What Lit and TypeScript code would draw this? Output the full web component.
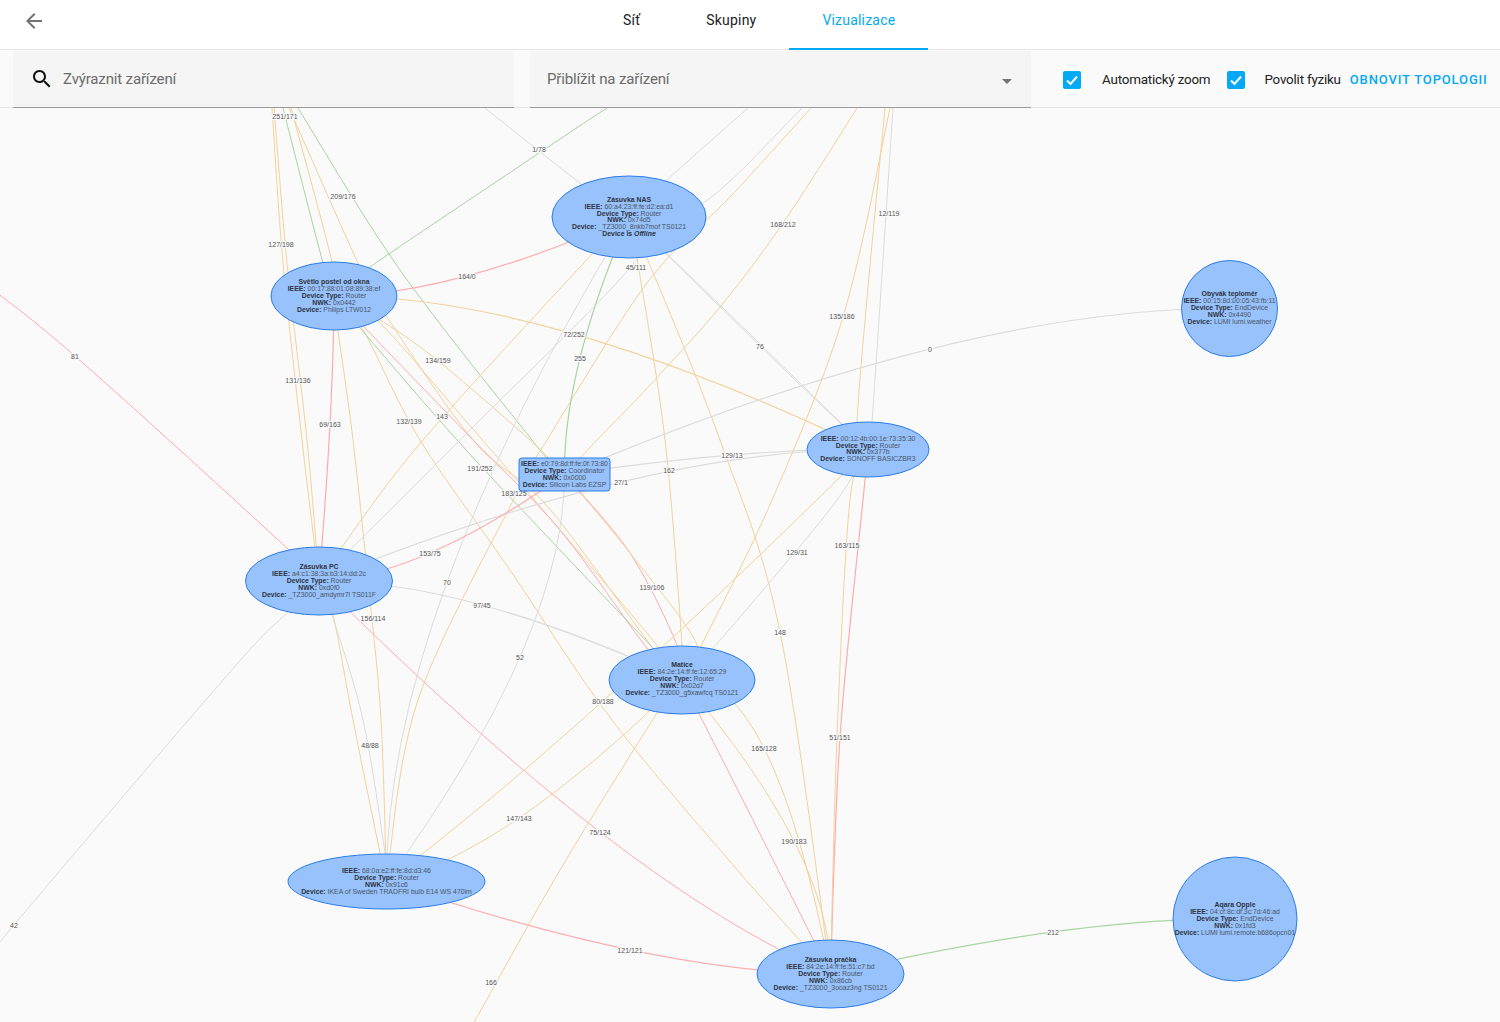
import { LitElement, html, css, svg } from "lit";
import { customElement } from "lit/decorators.js";

type Pt = [number, number];
const C: Record<string, Pt> = {
  nas: [629, 217], sv: [334, 296], pc: [319, 581], co: [564.5, 474.5], so: [868, 449.5],
  ma: [682, 680], ik: [386.5, 881.5], pr: [830.5, 974], ob: [1229.5, 308.5], aq: [1235, 919],
};
const O = "#f3d29b", G = "#a8d5a0", R = "#ffabab", Y = "#dcdcdc";

/* p: smooth line through hand-read points; q: [from, point at the curve's middle, to] */
const EDGES: { c: string; w?: number; p?: Pt[]; q?: [Pt, Pt, Pt] }[] = [
  { c: O, p: [[271, 90], [272, 108], [283, 263], [302, 440], [319, 581]] },
  { c: O, p: [[272, 90], [274, 108], [287, 263], [307, 440], [319, 581]] },
  { c: G, p: [[279, 90], [283, 108], [323, 263], C.sv] },
  { c: O, p: [[286, 90], [291, 108], [332, 262], C.sv] },
  { c: O, p: [[280, 90], [289, 108], [358, 263], [387, 317], [473, 440], [548, 507], [652, 647], C.ma] },
  { c: G, p: [[287, 90], [298, 108], [400, 270], [532, 440], [548, 458], C.co] },
  { c: O, p: [C.sv, [380, 320], [437, 360], [530, 440], C.co] },
  { c: O, p: [C.sv, [362, 328], [420, 440], [510, 570], [612, 720], [740, 873], C.pr] },
  { c: O, p: [C.sv, [375, 318], [465, 420], [560, 530], [665, 655], C.ma] },
  { c: R, p: [C.sv, [365, 328], [473, 440], [560, 530], [647, 648], C.ma] },
  { c: G, p: [C.sv, [360, 328], [457, 440], [560, 550], [652, 647], C.ma] },
  { c: R, w: 1.2, q: [C.sv, [330, 424], C.pc] },
  { c: O, p: [C.sv, [338, 331], [353, 440], [370, 600], [381, 720], C.ik] },
  { c: O, w: 1.2, q: [C.sv, [574, 334], C.so] },
  { c: R, w: 1.2, q: [C.sv, [467, 276], C.nas] },
  { c: G, p: [C.sv, [370, 267], [490, 186], [607, 108], [640, 90]] },
  { c: Y, p: [[465, 92], [485, 108], [580, 183], C.nas] },
  { c: Y, p: [C.nas, [667, 180], [748, 108], [768, 90]] },
  { c: Y, p: [C.nas, [703, 203], [802, 108], [820, 90]] },
  { c: O, p: [[822, 95], [811, 108], [730, 197], [647, 283], [547, 440], [517, 493], [418, 700], C.ik] },
  { c: O, p: [[865, 92], [857, 108], [783, 223], [720, 307], [650, 385], [597, 440], C.co] },
  { c: O, p: [C.nas, [593, 253], [423, 440], [342, 547], C.pc] },
  { c: Y, p: [C.nas, [638, 258], [460, 440], [352, 548], C.pc] },
  { c: Y, q: [C.nas, [447, 582], C.ik] },
  { c: G, w: 1.2, q: [C.nas, [580, 358], C.co] },
  { c: O, p: [C.nas, [637, 258], [665, 440], [682, 645], C.ma] },
  { c: O, p: [C.nas, [647, 258], [720, 440], [780, 632], C.pr] },
  { c: Y, q: [C.nas, [760, 346], C.so] },
  { c: Y, q: [C.nas, [758, 342], C.so] },
  { c: Y, w: 1.2, q: [C.co, [732, 455], C.so] },
  { c: Y, w: 1.2, q: [C.pc, [621, 482], C.so] },
  { c: Y, w: 1.2, q: [C.co, [930, 349], C.ob] },
  { c: R, w: 1.2, q: [C.co, [430, 553], C.pc] },
  { c: Y, q: [C.co, [520, 657], C.ik] },
  { c: R, p: [C.co, [630, 553], [677, 645], C.ma] },
  { c: O, p: [C.co, [630, 553], [697, 645], C.ma] },
  { c: Y, w: 1.2, q: [C.pc, [482, 605], C.ma] },
  { c: R, q: [C.pc, [600, 832], C.pr] },
  { c: O, p: [C.pc, [333, 615], [353, 720], [380, 853], C.ik] },
  { c: Y, p: [C.pc, [332, 615], [363, 720], [385, 853], C.ik] },
  { c: Y, p: [C.pc, [288, 612], [230, 672], [14, 925], [-20, 970]] },
  { c: R, p: [[-20, 280], [75, 356], [287, 548], C.pc] },
  { c: O, q: [C.ik, [603, 701], C.so] },
  { c: O, q: [C.ik, [519, 818], C.ma] },
  { c: Y, p: [C.so, [837, 500], [780, 570], [713, 648], C.ma] },
  { c: R, w: 1.2, p: [C.so, [863, 500], [840, 737], C.pr] },
  { c: O, p: [C.so, [850, 500], [837, 737], C.pr] },
  { c: O, p: [[888, 90], [885, 108], [857, 422], C.so] },
  { c: O, p: [[893, 90], [890, 108], [843, 317], [772, 500], [700, 648], C.ma] },
  { c: Y, p: [[894, 90], [893, 108], [872, 422], C.so] },
  { c: R, q: [C.ma, [757, 828], C.pr] },
  { c: O, q: [C.ma, [794, 841], C.pr] },
  { c: O, q: [C.ma, [764, 748], C.pr] },
  { c: O, p: [[460, 1040], [474, 1022], [560, 870], [657, 713], C.ma] },
  { c: R, w: 1.2, q: [C.ik, [630, 950], C.pr] },
  { c: G, w: 1.2, q: [C.pr, [1053, 932], C.aq] },
];

const LABELS: [string, number, number][] = [
  ["251/171", 285, 116], ["1/78", 539, 149], ["209/176", 343, 196], ["127/198", 281, 244],
  ["168/212", 783, 224], ["12/119", 889, 213], ["164/0", 467, 276], ["45/111", 636, 267],
  ["135/186", 842, 316], ["76", 760, 346], ["72/252", 574, 334], ["255", 580, 358],
  ["134/159", 438, 360], ["0", 930, 349], ["81", 75, 356], ["131/136", 298, 380],
  ["143", 442, 416], ["132/139", 409, 421], ["69/163", 330, 424], ["129/13", 732, 455],
  ["162", 669, 470], ["191/252", 480, 468], ["27/1", 621, 482], ["183/125", 514, 493],
  ["163/115", 847, 545], ["153/75", 430, 553], ["129/31", 797, 552], ["70", 447, 582],
  ["119/106", 652, 587], ["97/45", 482, 605], ["156/114", 373, 618], ["148", 780, 632],
  ["52", 520, 657], ["80/188", 603, 701], ["51/151", 840, 737], ["48/88", 370, 745],
  ["165/128", 764, 748], ["147/143", 519, 818], ["75/124", 600, 832], ["190/183", 794, 841],
  ["42", 14, 925], ["212", 1053, 932], ["121/121", 630, 950], ["166", 491, 982],
];

type Line = { k?: string; v?: string; it?: string; y: number };
type Node = { cx: number; cy: number; rx: number; ry: number; box?: boolean; lines: Line[] };
const dev = (ieee: string, type: string, nwk: string, device: string, y: number, name?: string): Line[] => {
  const out: Line[] = [];
  if (name) { out.push({ k: name, y: y - 7 }); }
  out.push({ k: "IEEE: ", v: ieee, y }, { k: "Device Type: ", v: type, y: y + 7 }, { k: "NWK: ", v: nwk, y: y + 13.7 }, { k: "Device: ", v: device, y: y + 20.5 });
  return out;
};
const NODES: Node[] = [
  { cx: 629, cy: 217, rx: 77, ry: 41, lines: [...dev("60:a4:23:ff:fe:d2:ea:d1", "Router", "0x74d5", "_TZ3000_8nkb7mof TS0121", 208.6, "Zásuvka NAS"), { k: "Device is ", it: "Offline", y: 235.6 }] },
  { cx: 334, cy: 296, rx: 63, ry: 34, lines: dev("00:17:88:01:08:89:38:ef", "Router", "0x0442", "Philips LTW012", 291.1, "Světlo postel od okna") },
  { cx: 319, cy: 581, rx: 73.5, ry: 34, lines: dev("a4:c1:38:3a:b3:14:dd:2c", "Router", "0xd0f0", "_TZ3000_amdymr7l TS011F", 576.1, "Zásuvka PC") },
  { cx: 564.5, cy: 474.5, rx: 45.5, ry: 16.5, box: true, lines: dev("e0:79:8d:ff:fe:0f:73:80", "Coordinator", "0x0000", "Silicon Labs EZSP", 466.1) },
  { cx: 868, cy: 449.5, rx: 61, ry: 27.5, lines: dev("00:12:4b:00:1e:73:35:30", "Router", "0x377b", "SONOFF BASICZBR3", 440.6) },
  { cx: 682, cy: 680, rx: 73, ry: 34, lines: dev("84:2e:14:ff:fe:12:65:29", "Router", "0x02d7", "_TZ3000_g5xawfcq TS0121", 674.1, "Matice") },
  { cx: 386.5, cy: 881.5, rx: 98.5, ry: 27.5, lines: dev("68:0a:e2:ff:fe:8d:d3:46", "Router", "0x91c6", "IKEA of Sweden TRADFRI bulb E14 WS 470lm", 873) },
  { cx: 830.5, cy: 974, rx: 73.5, ry: 34, lines: dev("84:2e:14:ff:fe:51:c7:bd", "Router", "0x86cb", "_TZ3000_3ooaz3ng TS0121", 969.1, "Zásuvka pračka") },
  { cx: 1229.5, cy: 308.5, rx: 48, ry: 48, lines: dev("00:15:8d:00:05:43:fb:11", "EndDevice", "0x4490", "LUMI lumi.weather", 303.1, "Obyvák teploměr") },
  { cx: 1235, cy: 919, rx: 62, ry: 62, lines: dev("04:cf:8c:df:3c:7d:46:ad", "EndDevice", "0x1fd3", "LUMI lumi.remote.b686opcn01", 914.1, "Aqara Opple") },
];

function smooth(p: Pt[]): string {
  let d = `M${p[0][0]} ${p[0][1]}`;
  for (let i = 0; i < p.length - 1; i++) {
    const a = p[Math.max(i - 1, 0)], b = p[i], c = p[i + 1], e = p[Math.min(i + 2, p.length - 1)];
    const c1 = [b[0] + (c[0] - a[0]) / 6, b[1] + (c[1] - a[1]) / 6];
    const c2 = [c[0] - (e[0] - b[0]) / 6, c[1] - (e[1] - b[1]) / 6];
    d += `C${c1[0]} ${c1[1]} ${c2[0]} ${c2[1]} ${c[0]} ${c[1]}`;
  }
  return d;
}
function quad([a, m, b]: [Pt, Pt, Pt]): string {
  const cx = 2 * m[0] - (a[0] + b[0]) / 2, cy = 2 * m[1] - (a[1] + b[1]) / 2;
  return `M${a[0]} ${a[1]}Q${cx} ${cy} ${b[0]} ${b[1]}`;
}

@customElement("app-root")
export class AppRoot extends LitElement {
  static styles = css`
    :host { display: block; width: 1500px; height: 1022px; background: #fafafa; overflow: hidden; font-family: Roboto, "Liberation Sans", sans-serif; }
    .page { display: flex; flex-direction: column; height: 1022px; }
    .header { display: flex; align-items: stretch; height: 49px; background: #fff; border-bottom: 1px solid #e6e6e6; flex: none; }
    .back { width: 24px; height: 24px; margin: 9px 0 0 22px; fill: #727272; flex: none; }
    .tabs { display: flex; margin-left: 544px; }
    .tab { padding: 0 33px 8px; display: flex; align-items: center; font-size: 14px; letter-spacing: 0.2px; color: #212121; border-bottom: 2px solid transparent; height: 50px; box-sizing: border-box; white-space: nowrap; }
    .tab.active { color: #03a9f4; border-bottom-color: #03a9f4; }
    .toolbar { display: flex; align-items: flex-start; height: 58px; flex: none; background: #fafafa; border-bottom: 1px solid #e4e4e4; box-sizing: border-box; padding: 1px 0 0 13px; }
    .field { width: 501px; height: 57px; box-sizing: border-box; background: #f5f5f5; border-bottom: 1px solid #9b9b9b; display: flex; align-items: center; font-size: 15px; letter-spacing: -0.15px; color: #6b6b6b; flex: none; white-space: nowrap; }
    .field + .field { margin-left: 16px; padding-left: 17px; }
    .search { width: 24px; height: 24px; margin: 0 9px 0 17px; fill: #111; flex: none; }
    .arrow { margin-left: auto; margin-right: 19px; margin-top: 4px; width: 0; height: 0; border-left: 5px solid transparent; border-right: 5px solid transparent; border-top: 5px solid #757575; }
    .controls { display: flex; align-items: center; flex: 1; height: 57px; font-size: 13.4px; letter-spacing: -0.2px; color: #212121; white-space: nowrap; }
    .cb { width: 18px; height: 18px; border-radius: 2px; background: #03a9f4; flex: none; display: block; }
    .cb path { fill: none; stroke: #fff; stroke-width: 2; }
    .cb.a { margin-left: 32px; }
    .cb.b { margin-left: 17px; }
    .lbl { margin-left: 21px; }
    .lbl2 { margin-left: 19px; }
    .btn { margin-left: 9px; color: #03a9f4; font-weight: 500; letter-spacing: 0.85px; font-size: 13px; text-transform: uppercase; }
    .graph { flex: 1; position: relative; overflow: hidden; background: #fafafa; }
    .canvas { display: block; width: 1500px; height: 914px; font-family: "Liberation Sans", Arial, sans-serif; }
    .edge { fill: none; }
    .gray-aa { opacity: 0.999; }
    .elabel { font-size: 7px; fill: #555; text-anchor: middle; paint-order: stroke; stroke: #fafafa; stroke-width: 2px; }
    .node { fill: #97c2fc; stroke: #2b7ce9; stroke-width: 1; }
    .ntext { font-size: 6.9px; fill: #4c5566; text-anchor: middle; }
    .ntext .k { font-weight: 700; fill: #2e3340; }
    .ntext .i { font-weight: 700; font-style: italic; fill: #2e3340; }
  `;

  render() {
    return html`
      <div class="page">
        <div class="header">
          <svg class="back" viewBox="0 0 24 24"><path d="M20 11H7.83l5.59-5.59L12 4l-8 8 8 8 1.41-1.41L7.83 13H20v-2z"/></svg>
          <div class="tabs">
            <div class="tab">Síť</div>
            <div class="tab">Skupiny</div>
            <div class="tab active">Vizualizace</div>
          </div>
        </div>
        <div class="toolbar">
          <div class="field">
            <svg class="search" viewBox="0 0 24 24"><path d="M15.5 14h-.79l-.28-.27C15.41 12.59 16 11.11 16 9.5 16 5.91 13.09 3 9.5 3S3 5.91 3 9.5 5.91 16 9.5 16c1.61 0 3.09-.59 4.23-1.57l.27.28v.79l5 4.99L20.49 19l-4.99-5zm-6 0C7.01 14 5 11.99 5 9.5S7.01 5 9.5 5 14 7.01 14 9.5 11.99 14 9.5 14z"/></svg>
            Zvýraznit zařízení
          </div>
          <div class="field">Přiblížit na zařízení<span class="arrow"></span></div>
          <div class="controls">
            <svg class="cb a" viewBox="0 0 18 18"><path d="M4 9.5l3.5 3.5L14 5.5"/></svg>
            <span class="lbl">Automatický zoom</span>
            <svg class="cb b" viewBox="0 0 18 18"><path d="M4 9.5l3.5 3.5L14 5.5"/></svg>
            <span class="lbl2">Povolit fyziku</span>
            <span class="btn">Obnovit topologii</span>
          </div>
        </div>
        <div class="graph">
          <svg class="canvas" viewBox="0 108 1500 914">
            ${EDGES.map((e) => svg`<path class="edge" d=${e.q ? quad(e.q) : smooth(e.p!)} stroke=${e.c} stroke-width=${e.w ?? 1}></path>`)}
            <g class="gray-aa">
              ${LABELS.map(([t, x, y]) => svg`<text class="elabel" x=${x} y=${y + 2.5}>${t}</text>`)}
              ${NODES.map((n) => svg`
                ${n.box
                  ? svg`<rect class="node" x=${n.cx - n.rx} y=${n.cy - n.ry} width=${n.rx * 2} height=${n.ry * 2} rx="3"></rect>`
                  : svg`<ellipse class="node" cx=${n.cx} cy=${n.cy} rx=${n.rx} ry=${n.ry}></ellipse>`}
                ${n.lines.map((l) => svg`<text class="ntext" x=${n.cx} y=${l.y}><tspan class="k">${l.k ?? ""}</tspan><tspan>${l.v ?? ""}</tspan><tspan class="i">${l.it ?? ""}</tspan></text>`)}
              `)}
            </g>
          </svg>
        </div>
      </div>
    `;
  }
}
